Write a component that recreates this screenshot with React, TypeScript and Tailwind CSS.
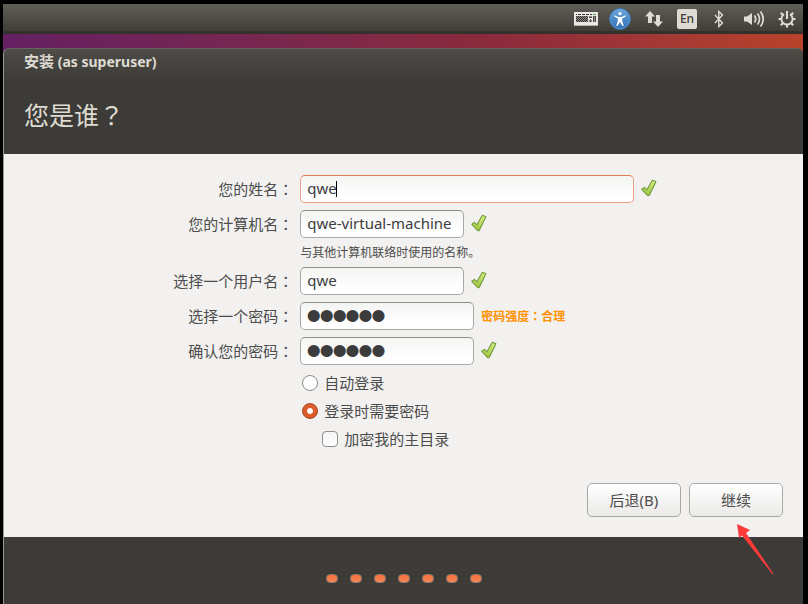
import { useId, useState } from "react";
import type { ReactNode } from "react";

const latin = "font-['Noto_Sans','Noto_Sans_CJK_SC',sans-serif]";

function Slot({ label, wide = true, children }: { label: string; wide?: boolean; children: ReactNode }) {
  return (
    <button
      type="button"
      aria-label={label}
      className={`flex h-full items-center justify-center ${wide ? "w-[34px]" : "w-8"}`}
    >
      {children}
    </button>
  );
}

function KeyboardIcon() {
  return (
    <svg width="24" height="14" viewBox="0 0 24 14" shapeRendering="crispEdges">
      <rect width="24" height="14" fill="#e9e8e4" />
      <rect x="0" y="13" width="24" height="1" fill="#b5b3ac" />
      <g fill="#3a3935">
        <path d="M2 2h1v1H2zM4 2h3v1H4zM8 2h3v1H8zM12 2h3v1h-3zM16 2h2v1h-2z" />
      </g>
      <path d="M19 2h3v1h-3z" fill="#4fae4a" />
      <path d="M2 4h12v6H2zM15 4h3v2h-3zM15 8h3v2h-3zM19 4h3v6h-3z" fill="#8b8a85" />
      <path d="M2 4.500h12M2 6.500h12M2 8.500h12" stroke="#34332f" strokeDasharray="1 1" />
      <path d="M3 5.500h11M3 7.500h11M3 9.500h11" stroke="#34332f" strokeDasharray="1 1" />
      <path d="M15 5.500h3M16.500 7v3M19.500 4v6M21.500 4v6" stroke="#4a4944" />
    </svg>
  );
}

function AccessIcon() {
  return (
    <svg width="22" height="22" viewBox="0 0 22 22">
      <defs>
        <linearGradient id="access" x1="0" y1="0" x2="0" y2="1">
          <stop offset="0" stopColor="#6ea6dc" />
          <stop offset="1" stopColor="#2f6fb3" />
        </linearGradient>
      </defs>
      <circle cx="11" cy="11" r="10.4" fill="url(#access)" stroke="#3b74b4" strokeWidth="1" />
      <circle cx="11" cy="11" r="9.8" fill="none" stroke="#6fa3d8" strokeWidth=".5" />
      <circle cx="11" cy="5.600" r="1.700" fill="#fff" />
      <path
        d="M5.300 7.200l4.200 1.700h3l4.200-1.700.4 1-4 2.300.2 3 1.500 4-1.200.5L11 14l-2.600 4-1.200-.5 1.500-4 .2-3-4-2.300z"
        fill="#fff"
      />
    </svg>
  );
}

function NetworkIcon() {
  return (
    <svg width="18" height="18" viewBox="0 0 18 18" fill="#dfdbd2">
      <path d="M5 1l5 5.500H7V13H3V6.500H0z" />
      <path d="M13 17l5-5.500h-3V5h-4v6.500H8z" />
    </svg>
  );
}

function BluetoothIcon() {
  return (
    <svg width="12" height="18" viewBox="0 0 12 18" fill="none" stroke="#dfdbd2" strokeWidth="1.400">
      <path d="M1 5l7.500 8L4.800 16.600V1.400L8.500 5 1 13" />
    </svg>
  );
}

function VolumeIcon() {
  return (
    <svg width="22" height="18" viewBox="0 0 22 18" fill="none" stroke="#dfdbd2" strokeWidth="1.700">
      <path d="M1 6.500h3L9 3v12L4 11.500H1z" fill="#dfdbd2" stroke="none" />
      <path d="M11.500 5.500q2.500 3.500 0 7M14.500 3.500q4 5.500 0 11" />
      <path d="M17.500 1.500q5.500 7.500 0 15" />
    </svg>
  );
}

function PowerIcon() {
  return (
    <svg width="18" height="18" viewBox="0 0 18 18" fill="none" stroke="#dfdbd2">
      <path d="M6 4.200a5.600 5.600 0 1 0 6 0" strokeWidth="1.900" />
      <path d="M9 1v8" strokeWidth="2" />
      <path
        d="M2.800 2.800l2.200 2.200M15.200 2.800L13 5M.5 9h3M17.500 9h-3M2.800 15.200L5 13M15.200 15.200L13 13M9 17.500v-3"
        strokeWidth="2.200"
      />
    </svg>
  );
}

function Tick() {
  return (
    <svg width="16" height="18" viewBox="0 0 16 18" className="mb-0.5 shrink-0" role="img" aria-label="有效">
      <defs>
        <linearGradient id="tick" x1="0" y1="0" x2="0" y2="1">
          <stop offset="0" stopColor="#d9ee85" />
          <stop offset="1" stopColor="#9cc43c" />
        </linearGradient>
      </defs>
      <path
        d="M.8 10.300l2.600-1.900 2.500 2.400L11.400 1.300l3.500 1.500-6.700 13.600-1.200.4z"
        fill="url(#tick)"
        stroke="#6f9a3c"
        strokeWidth="1.100"
        strokeLinejoin="round"
      />
    </svg>
  );
}

function Colon() {
  return <span className="font-['Noto_Sans_CJK_JP',sans-serif]">：</span>;
}

type FieldProps = {
  label: string;
  value: string;
  width: string;
  type?: string;
  focused?: boolean;
  status?: ReactNode;
};

function Field({ label, value, width, type = "text", focused, status = <Tick /> }: FieldProps) {
  const id = useId();
  const [text, setText] = useState(value);
  const border = focused ? "border-[#e9a086] border-t-[#e07b50]" : "border-[#a9a8a5] border-t-[#8f8e8b]";
  const face =
    type === "password"
      ? "font-['Liberation_Sans',sans-serif] text-[37px] [-webkit-text-stroke:2px_#3c3c3c]"
      : `${latin} pb-0.5 text-[15px]`;
  return (
    <>
      <label htmlFor={id} className="text-right">
        {label}
        <Colon />
      </label>
      <div className="flex items-center gap-[7px]">
        <div className={`relative ${width}`}>
          <input
            id={id}
            type={type}
            value={text}
            onChange={(e) => setText(e.target.value)}
            className={`block h-7 w-full rounded-[5px] border bg-linear-to-b from-[#f4f4f3] to-white to-80% px-1.5 text-[#3c3c3c] outline-none ${border} ${face}`}
          />
          {focused && <span className="absolute top-1.5 left-9 h-4 w-px bg-black" />}
        </div>
        {status}
      </div>
    </>
  );
}

function Option({ label, checked, onSelect }: { label: string; checked: boolean; onSelect: () => void }) {
  return (
    <label className="flex h-7 items-center gap-1.5">
      <input
        type="radio"
        name="login"
        checked={checked}
        onChange={onSelect}
        className="size-4 appearance-none rounded-full border border-[#8f8e8b] bg-white checked:border-[#a8431c] checked:bg-radial checked:from-white checked:from-25% checked:to-[#dc5c2e] checked:to-35%"
      />
      {label}
    </label>
  );
}

function DialogButton({ children }: { children: ReactNode }) {
  return (
    <button
      type="button"
      className="h-[34px] w-[94px] rounded-[5px] border border-[#a9a8a5] bg-linear-to-b from-white to-[#ebeae8]"
    >
      {children}
    </button>
  );
}

export default function App() {
  const [auto, setAuto] = useState(false);
  const [encrypt, setEncrypt] = useState(false);
  return (
    <div className={`flex min-h-screen flex-col bg-black pt-1 pr-[5px] pl-[3px] text-[15px] text-[#4c4c4c] ${latin}`}>
      <nav className="flex h-[30px] items-center justify-end border-b-3 border-[#32312c] bg-linear-to-b from-[#5f5e57] to-[#3f3e39] pt-0.5">
        <Slot label="键盘"><KeyboardIcon /></Slot>
        <Slot label="辅助功能"><AccessIcon /></Slot>
        <Slot label="网络"><NetworkIcon /></Slot>
        <button
          type="button"
          className="mx-1.5 h-5 w-5 rounded-[2px] bg-[#dfdbd2] text-[12px] leading-5 font-medium text-[#3c3b37]"
        >
          En
        </button>
        <Slot label="蓝牙"><BluetoothIcon /></Slot>
        <Slot label="音量"><VolumeIcon /></Slot>
        <Slot label="会话" wide={false}><PowerIcon /></Slot>
      </nav>

      <div className="flex flex-1 flex-col bg-linear-to-r from-[#651f62] via-[#8a2a3c] via-60% to-[#b8432a] pt-3.5">
        <main className="flex flex-1 flex-col rounded-t-[6px] border-l border-[#98978f] bg-[#3c3b37]">
          <header className="h-[106px] rounded-t-[6px] border-t border-[#66655f] bg-linear-to-b from-[#4d4c47] to-[#3c3b37] to-30% px-5 text-[#dfdbd2]">
            <h1 className="text-[14px] leading-6 font-bold">
              <span className="text-[15px]">安装</span> (as superuser)
            </h1>
            <h2 className="pt-[22px] text-[25px] leading-9">
              您是谁<span className="font-['Noto_Sans_CJK_JP',sans-serif]">？</span>
            </h2>
          </header>

          <form className="flex flex-col bg-[#f2f1ef] pt-[21px] pb-5">
            <div className="grid grid-cols-[36.2%_1fr] items-center gap-x-[7px] gap-y-[7px]">
              <Field label="您的姓名" value="qwe" width="w-[334px]" focused />
              <Field label="您的计算机名" value="qwe-virtual-machine" width="w-[164px]" />
              <p className="col-start-2 text-[12px] leading-[15px]">与其他计算机联络时使用的名称。</p>
              <Field label="选择一个用户名" value="qwe" width="w-[164px]" />
              <Field
                label="选择一个密码"
                value="secret"
                type="password"
                width="w-[174px]"
                status={
                  <strong className="text-[12px] text-[#ff9000]">
                    密码强度<Colon />合理
                  </strong>
                }
              />
              <Field label="确认您的密码" value="secret" type="password" width="w-[174px]" />
              <div className="col-start-2 -mt-[3px] pl-0.5">
                <Option label="自动登录" checked={auto} onSelect={() => setAuto(true)} />
                <Option label="登录时需要密码" checked={!auto} onSelect={() => setAuto(false)} />
                <label className="flex h-7 items-center gap-1.5 pl-5">
                  <input
                    type="checkbox"
                    checked={encrypt}
                    onChange={(e) => setEncrypt(e.target.checked)}
                    className="size-4 appearance-none rounded-[4px] border border-[#8f8e8b] bg-linear-to-b from-[#f4f4f3] to-white checked:bg-[#dc5c2e]"
                  />
                  加密我的主目录
                </label>
              </div>
            </div>
            <div className="relative mt-[30px] flex justify-end gap-2 pr-5">
              <DialogButton>后退(B)</DialogButton>
              <DialogButton>继续</DialogButton>
              <svg
                className="pointer-events-none absolute top-[41px] right-7 z-10"
                width="38"
                height="52"
                viewBox="0 0 38 52"
                fill="#fb3b3a"
              >
                <path d="M0 0l13 6-4 3 27.500 41-.8.600L5 11.500 2 14z" />
              </svg>
            </div>
          </form>

          <footer className="flex flex-1 items-center justify-center gap-3 pt-4">
            {Array.from({ length: 7 }, (_, i) => (
              <span
                key={i}
                className="h-[9px] w-3 rounded-[4px] border border-[#8d7a6d] bg-linear-to-b from-[#f0703c] to-[#f58556]"
              />
            ))}
          </footer>
        </main>
      </div>
    </div>
  );
}
